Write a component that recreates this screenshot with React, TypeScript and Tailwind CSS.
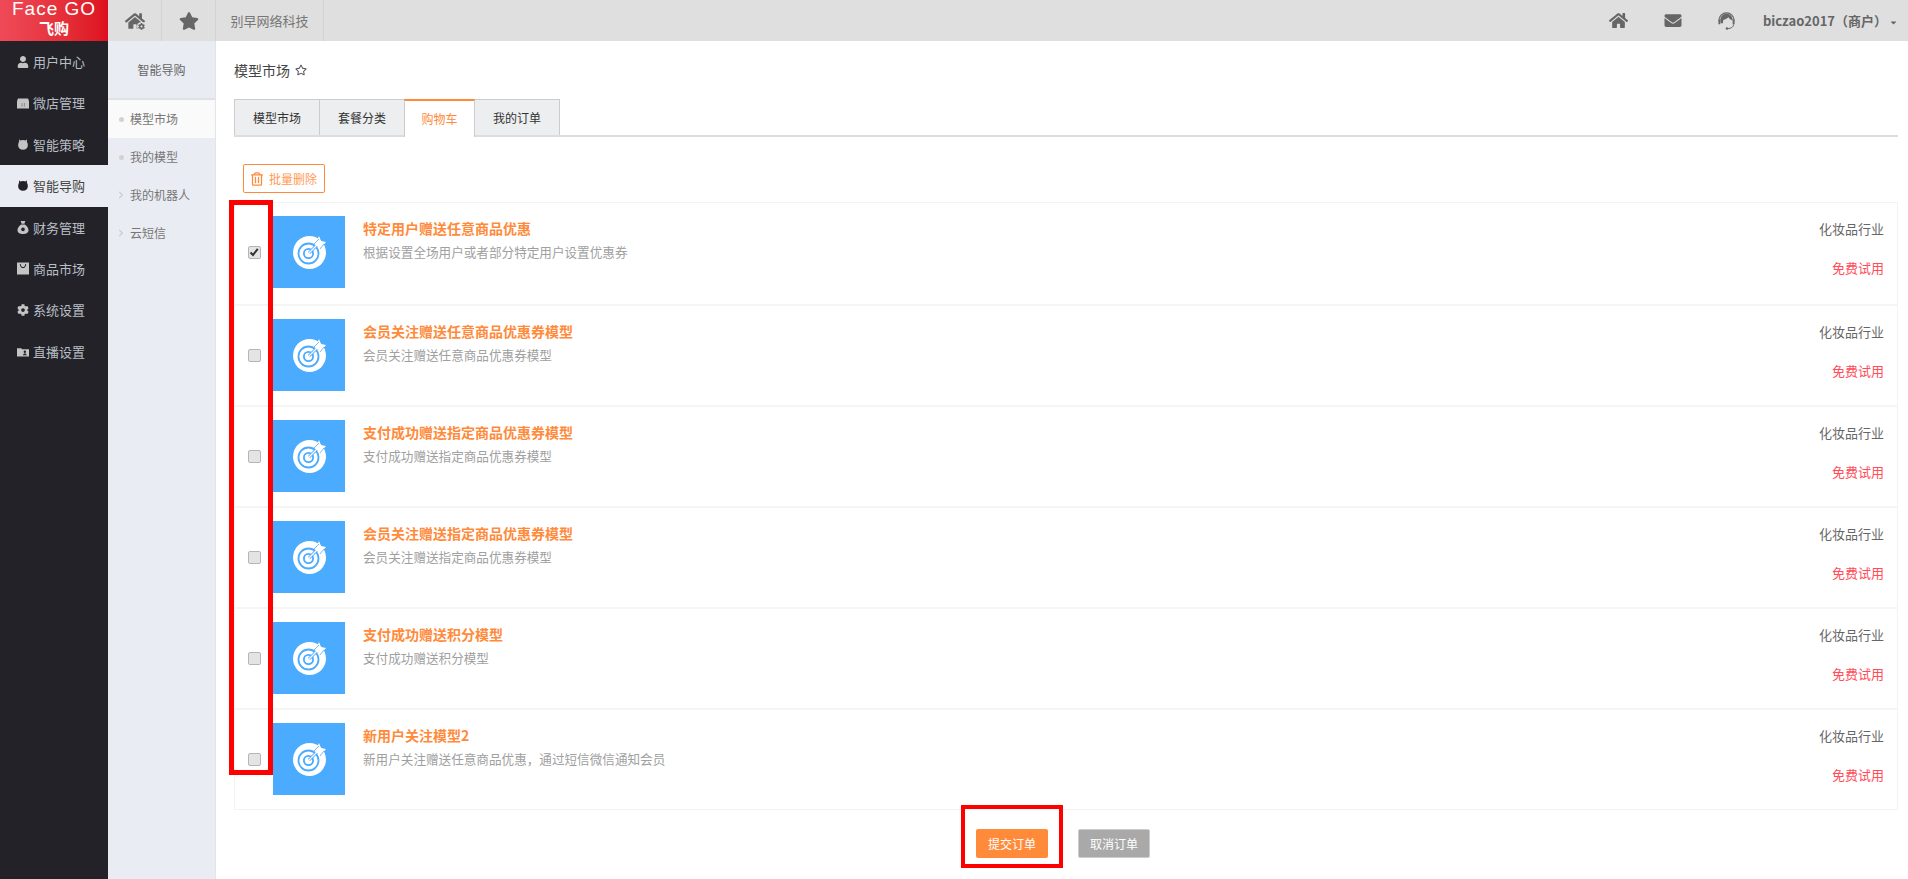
import { FaCaretDown, FaCog, FaEnvelope, FaHome, FaStar, FaRegStar, FaUser, FaRegTrashAlt, FaChevronRight } from "react-icons/fa";
import type { ReactNode } from "react";

const FONT = "font-['Microsoft_YaHei','Noto_Sans_CJK_SC','Noto_Sans',sans-serif]";

const TargetIcon = () => (
  <svg viewBox="0 0 33 33" className="w-[33px] h-[33px]">
    <circle cx="16.5" cy="16.5" r="16.5" fill="#fff" />
    <circle cx="15.5" cy="17.5" r="10" fill="none" stroke="#4aabff" strokeWidth="1.8" />
    <circle cx="15.5" cy="17.5" r="4.6" fill="none" stroke="#4aabff" strokeWidth="1.8" />
    <path d="M16 17 L25 8" stroke="#4aabff" strokeWidth="3" />
    <path d="M16 17 L25 8" stroke="#fff" strokeWidth="1.2" />
    <path d="M22 9 L26 0 L28 5 L33 6 L28 12 Z" fill="#fff" />
    <path d="M21 8 L26 3 M27 13 L31 8" stroke="#4aabff" strokeWidth="0.8" />
  </svg>
);

const icon = "w-[13px] h-[13px] fill-current";

const StoreIcon = () => (
  <svg viewBox="0 0 13 13" className={icon}>
    <path d="M1 1h11l1 3v8H0V4z" />
    <path d="M5 6h1v4H5zM7.500 6h1v4h-1z" fill="#232228" opacity="0.35" />
  </svg>
);
const BotIcon = () => (
  <svg viewBox="0 0 13 13" className={icon}>
    <circle cx="6.500" cy="7" r="5.300" />
    <path d="M2.500 0.800 4.500 3 2 4zM10.500 0.800 8.500 3 11 4z" />
  </svg>
);
const BagIcon = () => (
  <svg viewBox="0 0 13 14" className={icon}>
    <path d="M4 0h5L8 3H5z" />
    <path fillRule="evenodd" d="M4.500 3.800h4C11 5.500 12.500 8 12.500 10c0 2.500-2.500 4-6 4s-6-1.500-6-4c0-2 1.500-4.500 4-6.200zM6.500 7a2 2 0 1 0 0 4 2 2 0 0 0 0-4z" />
  </svg>
);
const ShopIcon = () => (
  <svg viewBox="0 0 13 13" className={icon}>
    <path fillRule="evenodd" d="M0 0h13v13H0zM3 1.500C3.500 5 5 6 6.500 6S9.500 5 10 1.500L9 1.500C8.700 4 7.500 5 6.500 5S4.300 4 4 1.500z" />
  </svg>
);
const CardIcon = () => (
  <svg viewBox="0 0 13 13" className={icon}>
    <path fillRule="evenodd" d="M0 3h4.500l1 1H13v8H0zM8.500 5.500a1.300 1.300 0 1 0 0 2.600 1.300 1.300 0 0 0 0-2.600zM6.500 10.500h4c0-1.200-1-1.900-2-1.900s-2 .7-2 1.900z" />
  </svg>
);

const HomeWithGear = () => (
  <div className="relative w-[20px] h-[18px]">
    <FaHome className="w-[20px] h-[18px] text-[#666]" />
    <span className="absolute right-[-1px] bottom-[-1px] w-[9px] h-[9px] rounded-full bg-[#dfdfdf] flex items-center justify-center">
      <FaCog className="w-[7px] h-[7px] text-[#666]" />
    </span>
  </div>
);

const Headset = () => (
  <svg viewBox="0 0 20 20" className="w-[19px] h-[19px]">
    <path d="M2 10a8 8 0 0 1 16 0" fill="none" stroke="#666" strokeWidth="1.300" />
    <path d="M3.500 10C3.500 5.500 6.500 3 10 3s6.500 2.500 6.500 7c-2-.5-3.500-2-4.500-3.500C10.500 8 8 9 6.500 9.500L6.300 13 4 13z" fill="#666" />
    <path d="M1.500 9h2v5h-2zM16.500 9h2v5h-2z" fill="#666" />
    <path d="M17.500 14c0 3-3 4.500-6 4.500" fill="none" stroke="#666" strokeWidth="1" />
    <circle cx="10.500" cy="18.500" r="1.300" fill="#666" />
  </svg>
);

const menu: { label: string; icon: ReactNode; active?: boolean }[] = [
  { label: "用户中心", icon: <FaUser className="w-[12px] h-[12px]" /> },
  { label: "微店管理", icon: <StoreIcon /> },
  { label: "智能策略", icon: <BotIcon /> },
  { label: "智能导购", icon: <BotIcon />, active: true },
  { label: "财务管理", icon: <BagIcon /> },
  { label: "商品市场", icon: <ShopIcon /> },
  { label: "系统设置", icon: <FaCog className="w-[12px] h-[12px]" /> },
  { label: "直播设置", icon: <CardIcon /> },
];

const rows = [
  { title: "特定用户赠送任意商品优惠", desc: "根据设置全场用户或者部分特定用户设置优惠券", checked: true },
  { title: "会员关注赠送任意商品优惠券模型", desc: "会员关注赠送任意商品优惠券模型" },
  { title: "支付成功赠送指定商品优惠券模型", desc: "支付成功赠送指定商品优惠券模型" },
  { title: "会员关注赠送指定商品优惠券模型", desc: "会员关注赠送指定商品优惠券模型" },
  { title: "支付成功赠送积分模型", desc: "支付成功赠送积分模型" },
  { title: "新用户关注模型2", desc: "新用户关注赠送任意商品优惠，通过短信微信通知会员" },
];

const tabs = [
  { label: "模型市场", w: "w-[86px]" },
  { label: "套餐分类", w: "w-[86px]" },
  { label: "购物车", w: "w-[71px]", active: true },
  { label: "我的订单", w: "w-[86px]" },
];

const subMenu = [
  { label: "模型市场", dot: true, active: true },
  { label: "我的模型", dot: true },
  { label: "我的机器人" },
  { label: "云短信" },
];

const Checkbox = ({ checked }: { checked?: boolean }) => (
  <span className="w-[13px] h-[13px] rounded-[2px] border border-[#b5b5b5] bg-[#e4e4e4] flex items-center justify-center">
    {checked && (
      <svg viewBox="0 0 10 10" className="w-[10px] h-[10px]">
        <path d="M1.500 5.500 4 8 8.800 1.800" fill="none" stroke="#333" strokeWidth="2" />
      </svg>
    )}
  </span>
);

const App = () => {
  return (
    <div className={`${FONT} flex h-[879px] w-[1908px] overflow-hidden bg-white`}>
      <aside className="w-[108px] shrink-0 bg-[#232228] flex flex-col">
        <div className="h-[41px] bg-gradient-to-r from-[#ef4a58] to-[#dd0f1e] text-white flex flex-col items-center overflow-hidden">
          <div className="font-['Liberation_Sans',sans-serif] font-light text-[19px] leading-[19px] tracking-[1px] mt-[-1px] whitespace-nowrap">Face GO</div>
          <div className="text-[15px] leading-[20px] font-bold">飞购</div>
        </div>
        {menu.map((m) => (
          <div
            key={m.label}
            className={`h-[41.4px] flex items-center pl-[17px] gap-[4px] text-[13px] ${m.active ? "bg-[#e9ecf2] text-[#444]" : "text-[#b9bec5]"}`}
          >
            <span className={`w-[12px] flex justify-center ${m.active ? "text-[#232228]" : "text-[#c4c4c4]"}`}>{m.icon}</span>
            {m.label}
          </div>
        ))}
      </aside>

      <div className="flex-1 flex flex-col min-w-0">
        <header className="h-[41px] bg-[#dfdfdf] flex items-stretch shrink-0">
          <div className="w-[54px] flex items-center justify-center border-r border-[#d2d2d2]">
            <HomeWithGear />
          </div>
          <div className="w-[54px] flex items-center justify-center border-r border-[#d2d2d2]">
            <FaStar className="w-[20px] h-[18px] text-[#666]" />
          </div>
          <div className="w-[108px] flex items-center justify-center border-r border-[#d2d2d2] text-[13px] text-[#777]">别早网络科技</div>
          <div className="ml-auto flex items-center text-[#666] pr-[10px]">
            <FaHome className="w-[19px] h-[17px]" />
            <FaEnvelope className="w-[20px] h-[17px] ml-[35px]" />
            <span className="ml-[34px]"><Headset /></span>
            <span className="ml-[27px] text-[13px] font-bold whitespace-nowrap">biczao2017（商户）</span>
            <FaCaretDown className="w-[9px] h-[9px] ml-[2px] mt-[3px]" />
          </div>
        </header>

        <div className="flex-1 flex min-h-0">
          <nav className="w-[108px] shrink-0 bg-[#e9ecf2] border-r border-[#e1e4e9]">
            <div className="h-[59px] flex items-center justify-center text-[12px] text-[#666] border-b-2 border-[#dfe1e5]">智能导购</div>
            {subMenu.map((s) => (
              <div
                key={s.label}
                className={`h-[38px] flex items-center text-[12px] text-[#777] pl-[10px] gap-[6px] ${s.active ? "bg-[#fafafa]" : ""}`}
              >
                <span className="w-[6px] flex justify-center">
                  {s.dot ? (
                    <span className="w-[5px] h-[5px] rounded-full bg-[#d2d2d2]" />
                  ) : (
                    <FaChevronRight className="w-[6px] h-[8px] text-[#ccc]" />
                  )}
                </span>
                {s.label}
              </div>
            ))}
          </nav>

          <main className="relative flex-1 min-w-0 pl-[18px] pr-[10px]">
            <div className="h-[58px] flex items-center gap-[5px] text-[14px] text-[#444]">
              模型市场
              <FaRegStar className="w-[12px] h-[12px] text-[#555]" />
            </div>
            <div className="flex h-[38px] border-b-2 border-[#ddd]">
              {tabs.map((t) => (
                <div
                  key={t.label}
                  className={`${t.w} -mr-px flex items-center justify-center text-[12px] border-x border-[#ccc] ${t.active ? "h-[38px] bg-white text-[#ff8a3a] border-t-2 border-t-[#ff8a3a] relative z-10" : "h-[36px] bg-[#eceef0] text-[#333] border-t border-t-[#ccc]"}`}
                >
                  {t.label}
                </div>
              ))}
            </div>
            <div className="pl-[9px] mt-[27px] mb-[9px]">
              <button className="w-[82px] h-[29px] flex items-center justify-center gap-[6px] border border-[#ff8a3a] rounded-[2px] text-[12px] text-[#ff9a55] bg-white">
                <FaRegTrashAlt className="w-[12px] h-[14px] text-[#ff8a3a]" />
                批量删除
              </button>
            </div>
            <div className="border border-[#f3f3f3]">
              {rows.map((r, i) => (
                <div key={r.title} className={`h-[101px] flex items-start pt-[13px] ${i > 0 ? "border-t-2 border-[#f5f5f5]" : ""}`}>
                  <div className="w-[38px] h-[72px] flex items-center justify-center shrink-0">
                    <Checkbox checked={r.checked} />
                  </div>
                  <div className="w-[72px] h-[72px] bg-[#4aabff] flex items-center justify-center shrink-0">
                    <TargetIcon />
                  </div>
                  <div className="ml-[18px] flex-1 min-w-0">
                    <div className="text-[14px] leading-[20px] mt-[2px] font-bold text-[#ff8a3a]">{r.title}</div>
                    <div className="text-[12.600px] leading-[20px] mt-[4px] text-[#a0a0a0]">{r.desc}</div>
                  </div>
                  <div className="pr-[13px] text-right shrink-0 mt-[3px]">
                    <div className="text-[13px] leading-[20px] text-[#666]">化妆品行业</div>
                    <div className="text-[13px] leading-[20px] mt-[19px] text-[#ff4d5a]">免费试用</div>
                  </div>
                </div>
              ))}
            </div>
            <div className="flex justify-center gap-[30px] mt-[19px] pr-[6px]">
              <button className="w-[72px] h-[29px] rounded-[2px] bg-[#ff8a3a] text-white text-[12px]">提交订单</button>
              <button className="w-[72px] h-[29px] rounded-[2px] bg-[#a9a9a9] border border-[#ccc] text-white text-[12px]">取消订单</button>
            </div>

            <div className="absolute left-[13px] top-[159px] w-[44px] h-[575px] border-[5px] border-[#ff0000] pointer-events-none" />
            <div className="absolute left-[745px] top-[764px] w-[102px] h-[63px] border-4 border-[#ff0000] pointer-events-none" />
          </main>
        </div>
      </div>
    </div>
  );
};

export default App;
